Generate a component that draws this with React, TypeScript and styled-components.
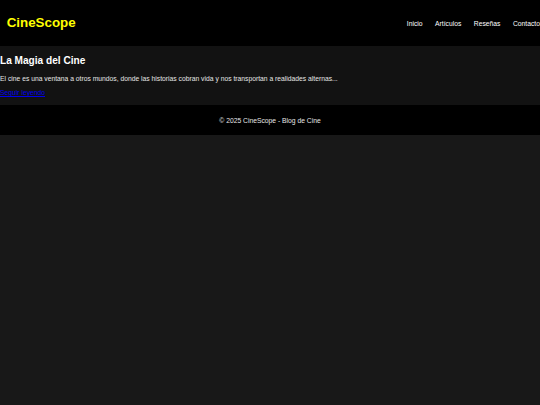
import React from "react";
import styled, { createGlobalStyle } from "styled-components";

const GlobalStyle = createGlobalStyle`
  html, body {
    margin: 0;
    padding: 0;
    background: #181818;
    color: #ffffff;
    font-family: "Liberation Sans", Arial, sans-serif;
    font-size: 6.75px;
    overflow: hidden;
  }
`;

const Header = styled.header`
  background: #000000;
  height: 46px;
  display: flex;
  align-items: center;
  justify-content: space-between;
  padding-left: 6.7px;
  white-space: nowrap;
`;

const Logo = styled.h1`
  margin: 0;
  font-size: 13.35px;
  font-weight: bold;
  color: #ffff00;
  line-height: 1;
`;

const Nav = styled.nav`
  display: flex;
  gap: 12.5px;
`;

const NavLink = styled.a`
  color: #ffffff;
  text-decoration: none;
  font-size: 6.75px;
`;

const Main = styled.main`
  background: #121212;
  padding: 0.1px 0;
  height: 59px;
  box-sizing: border-box;
`;

const Title = styled.h2`
  margin: 9px 0 8px;
  font-size: 10.1px;
  font-weight: bold;
  line-height: 1.2;
  color: #ffffff;
`;

const Text = styled.p`
  margin: 0 0 6.5px;
  color: #e6e6e6;
  font-size: 6.75px;
  line-height: 1.15;
`;

const ReadMore = styled.a`
  color: #0000ee;
  text-decoration: underline;
  font-size: 6.75px;
`;

const Footer = styled.footer`
  background: #000000;
  height: 30px;
  display: flex;
  align-items: center;
  justify-content: center;
  color: #e6e6e6;
  font-size: 6.75px;
`;

export default function App() {
  return (
    <>
      <GlobalStyle />
      <Header>
        <Logo>CineScope</Logo>
        <Nav>
          <NavLink href="#">Inicio</NavLink>
          <NavLink href="#">Artículos</NavLink>
          <NavLink href="#">Reseñas</NavLink>
          <NavLink href="#">Contacto</NavLink>
        </Nav>
      </Header>
      <Main>
        <Title>La Magia del Cine</Title>
        <Text>
          El cine es una ventana a otros mundos, donde las historias cobran vida y nos transportan a realidades alternas...
        </Text>
        <Text>
          <ReadMore href="#">Seguir leyendo</ReadMore>
        </Text>
      </Main>
      <Footer>© 2025 CineScope - Blog de Cine</Footer>
    </>
  );
}
